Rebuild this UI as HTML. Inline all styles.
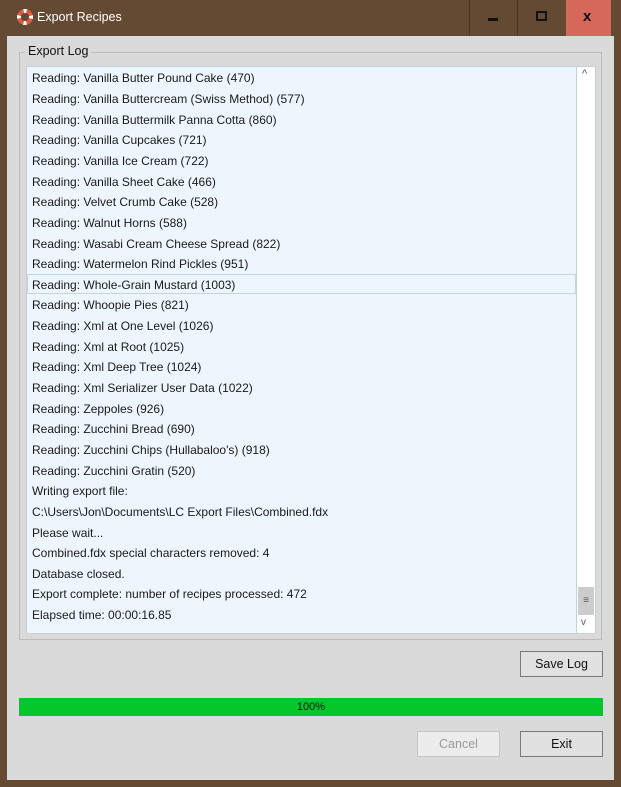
<!DOCTYPE html>
<html><head><style>
body{margin:0;width:621px;height:787px;background:#654a33;font-family:"Liberation Sans",sans-serif;position:relative;overflow:hidden}
.a{position:absolute}
#client{left:7px;top:36px;width:607px;height:744px;background:#dadada}
.title{left:37px;top:10px;color:#fff;font-size:12.5px}
.tb{top:0;height:36px}
.log{left:26px;top:66px;width:551px;height:568px;background:#eef6fd;border:1px solid #c9cfd6;box-sizing:border-box}
.row{position:absolute;left:6px;font-size:12px;color:#1a1a1a;white-space:nowrap}
.btn{background:#e1e1e1;border:1px solid #7a7a7a;box-sizing:border-box;font-size:12.5px;text-align:center;line-height:24px;color:#111}
</style></head><body>
<div class="a" id="client"></div>
<svg class="a" style="left:16px;top:8px" width="18" height="18" viewBox="0 0 18 18"><circle cx="9" cy="9" r="6" fill="none" stroke="#e05a40" stroke-width="4"/><circle cx="9" cy="9" r="6" fill="none" stroke="#fff" stroke-width="4" stroke-dasharray="3 6.4" stroke-dashoffset="1.5"/></svg>
<div class="a title">Export Recipes</div>
<div class="a tb" style="left:469px;width:1px;background:#4a3525"></div>
<div class="a tb" style="left:517px;width:1px;background:#4a3525"></div>
<div class="a" style="left:488px;top:18px;width:10px;height:3px;background:#111"></div>
<div class="a" style="left:536px;top:11px;width:7px;height:6px;border:2px solid #111"></div>
<div class="a tb" style="left:566px;width:45px;background:#d5685a"></div>
<div class="a" style="left:583px;top:8px;font-size:15px;font-weight:bold;color:#111">x</div>
<div class="a" style="left:19px;top:52px;width:583px;height:588px;border:1px solid #bcbcbc;box-sizing:border-box"></div>
<div class="a" style="left:25px;top:44px;background:#dadada;padding:0 3px;font-size:12.5px;color:#111">Export Log</div>
<div class="a log"></div>
<div class="a" style="left:576px;top:66px;width:20px;height:568px;background:#fff;border:1px solid #c9cfd6;box-sizing:border-box"></div>
<div class="a" style="left:582px;top:68px;font-size:11px;color:#555">^</div>
<div class="a" style="left:578px;top:587px;width:16px;height:28px;background:#cdcdcd;font-size:10px;text-align:center;line-height:28px;color:#555">≡</div>
<div class="a" style="left:581px;top:617px;font-size:10px;color:#555">v</div>
<div class="a" style="left:27px;top:274px;width:549px;height:20px;border:1px solid #c6d4e2;box-sizing:border-box"></div>
<div class="a" style="left:26px;top:68px">
<div class="row" style="top:3px">Reading: Vanilla Butter Pound Cake (470)</div>
<div class="row" style="top:24px">Reading: Vanilla Buttercream (Swiss Method) (577)</div>
<div class="row" style="top:45px">Reading: Vanilla Buttermilk Panna Cotta (860)</div>
<div class="row" style="top:65px">Reading: Vanilla Cupcakes (721)</div>
<div class="row" style="top:86px">Reading: Vanilla Ice Cream (722)</div>
<div class="row" style="top:107px">Reading: Vanilla Sheet Cake (466)</div>
<div class="row" style="top:127px">Reading: Velvet Crumb Cake (528)</div>
<div class="row" style="top:148px">Reading: Walnut Horns (588)</div>
<div class="row" style="top:169px">Reading: Wasabi Cream Cheese Spread (822)</div>
<div class="row" style="top:189px">Reading: Watermelon Rind Pickles (951)</div>
<div class="row" style="top:210px">Reading: Whole-Grain Mustard (1003)</div>
<div class="row" style="top:230px">Reading: Whoopie Pies (821)</div>
<div class="row" style="top:251px">Reading: Xml at One Level (1026)</div>
<div class="row" style="top:272px">Reading: Xml at Root (1025)</div>
<div class="row" style="top:292px">Reading: Xml Deep Tree (1024)</div>
<div class="row" style="top:313px">Reading: Xml Serializer User Data (1022)</div>
<div class="row" style="top:334px">Reading: Zeppoles (926)</div>
<div class="row" style="top:354px">Reading: Zucchini Bread (690)</div>
<div class="row" style="top:375px">Reading: Zucchini Chips (Hullabaloo's) (918)</div>
<div class="row" style="top:396px">Reading: Zucchini Gratin (520)</div>
<div class="row" style="top:416px">Writing export file:</div>
<div class="row" style="top:437px">C:\Users\Jon\Documents\LC Export Files\Combined.fdx</div>
<div class="row" style="top:458px">Please wait...</div>
<div class="row" style="top:478px">Combined.fdx special characters removed: 4</div>
<div class="row" style="top:499px">Database closed.</div>
<div class="row" style="top:519px">Export complete: number of recipes processed: 472</div>
<div class="row" style="top:540px">Elapsed time: 00:00:16.85</div>
</div>
<div class="a btn" style="left:520px;top:651px;width:83px;height:26px">Save Log</div>
<div class="a" style="left:19px;top:698px;width:584px;height:18px;background:#06c72a;font-size:11px;text-align:center;line-height:18px;color:#111">100%</div>
<div class="a btn" style="left:417px;top:731px;width:83px;height:26px;background:#ececec;border-color:#c4c4c4;color:#9a9a9a">Cancel</div>
<div class="a btn" style="left:520px;top:731px;width:83px;height:26px">Exit</div>
</body></html>
